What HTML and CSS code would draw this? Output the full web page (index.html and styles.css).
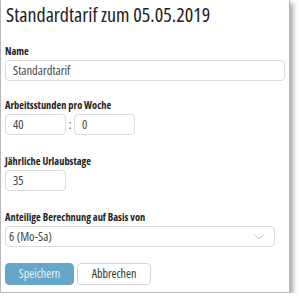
FILE: index.html
```html
<!DOCTYPE html>
<html>
<head>
<meta charset="utf-8">
<link rel="stylesheet" href="styles.css">
</head>
<body>
<div class="panel">
  <h1 class="title">Standardtarif zum 05.05.2019</h1>
  <div class="group g1">
    <label class="lbl">Name</label>
    <div class="input wide">Standardtarif</div>
  </div>
  <div class="group g2">
    <label class="lbl">Arbeitsstunden pro Woche</label>
    <div class="row">
      <div class="input small">40</div>
      <span class="colon">:</span>
      <div class="input small">0</div>
    </div>
  </div>
  <div class="group g3">
    <label class="lbl">Jährliche Urlaubstage</label>
    <div class="input small">35</div>
  </div>
  <div class="group g3">
    <label class="lbl">Anteilige Berechnung auf Basis von</label>
    <div class="input select">
      <span class="seltext">6 (Mo-Sa)</span>
      <svg class="chev" width="10" height="6" viewBox="0 0 10 6"><path d="M0.5 0.5 L5 5 L9.5 0.5" fill="none" stroke="#c8c8c8" stroke-width="1"/></svg>
    </div>
  </div>
  <div class="actions">
    <button class="btn primary">Speichern</button>
    <button class="btn secondary">Abbrechen</button>
  </div>
</div>
</body>
</html>
```
FILE: styles.css
```css
html, body { margin: 0; padding: 0; background: #fff; }
body { font-family: "Open Sans", sans-serif; color: #333; }
.panel {
  width: 290px;
  height: 293px;
  box-sizing: border-box;
  border-left: 1px solid #b8b8b8;
  border-right: 1px solid #b8b8b8;
  border-bottom: 1px solid #b8b8b8;
  box-shadow: 3px 3px 5px rgba(0,0,0,0.35);
  padding: 0 0 0 4px;
}
.title {
  margin: 0;
  padding: 2px 0 0 1px;
  font-family: "Open Sans", sans-serif;
  font-stretch: 78%;
  font-size: 20px;
  font-weight: 400;
  line-height: 26px;
  color: #222;
  white-space: nowrap;
}
.group { display: flex; flex-direction: column; }
.g1 { margin-top: 16px; }
.g2 { margin-top: 17px; }
.g3 { margin-top: 19px; }
.lbl {
  font-family: "Open Sans", sans-serif;
  font-stretch: 75%;
  font-size: 10.4px;
  font-weight: 700;
  line-height: 14px;
  margin-bottom: 2px;
  color: #222;
}
.input {
  height: 21px;
  box-sizing: border-box;
  border: 1px solid #dcdcdc;
  border-radius: 4px;
  font-family: "Open Sans", sans-serif;
  font-stretch: 86%;
  font-size: 12.5px;
  line-height: 19px;
  padding: 0 7px;
  color: #444;
}
.wide { width: 280px; }
.small { width: 61px; }
.row { display: flex; align-items: center; }
.colon { width: 8px; text-align: center; font-size: 12px; color: #666; line-height: 19px; }
.select {
  width: 270px;
  display: flex;
  justify-content: space-between;
  align-items: center;
  padding: 0 10px 0 3px;
}
.chev { margin-top: 1px; }
.actions { display: flex; gap: 3px; margin-top: 16px; }
.btn {
  height: 22px;
  box-sizing: border-box;
  border: 1px solid #d6d6d6;
  border-radius: 4px;
  background: #fff;
  font-family: "Open Sans", sans-serif;
  font-stretch: 80%;
  font-size: 12px;
  color: #333;
  padding: 0;
  line-height: 20px;
}
.primary {
  background: #66a6c9;
  border-color: #66a6c9;
  color: #e8f2f8;
  width: 69px;
}
.secondary { width: 74px; }
```
